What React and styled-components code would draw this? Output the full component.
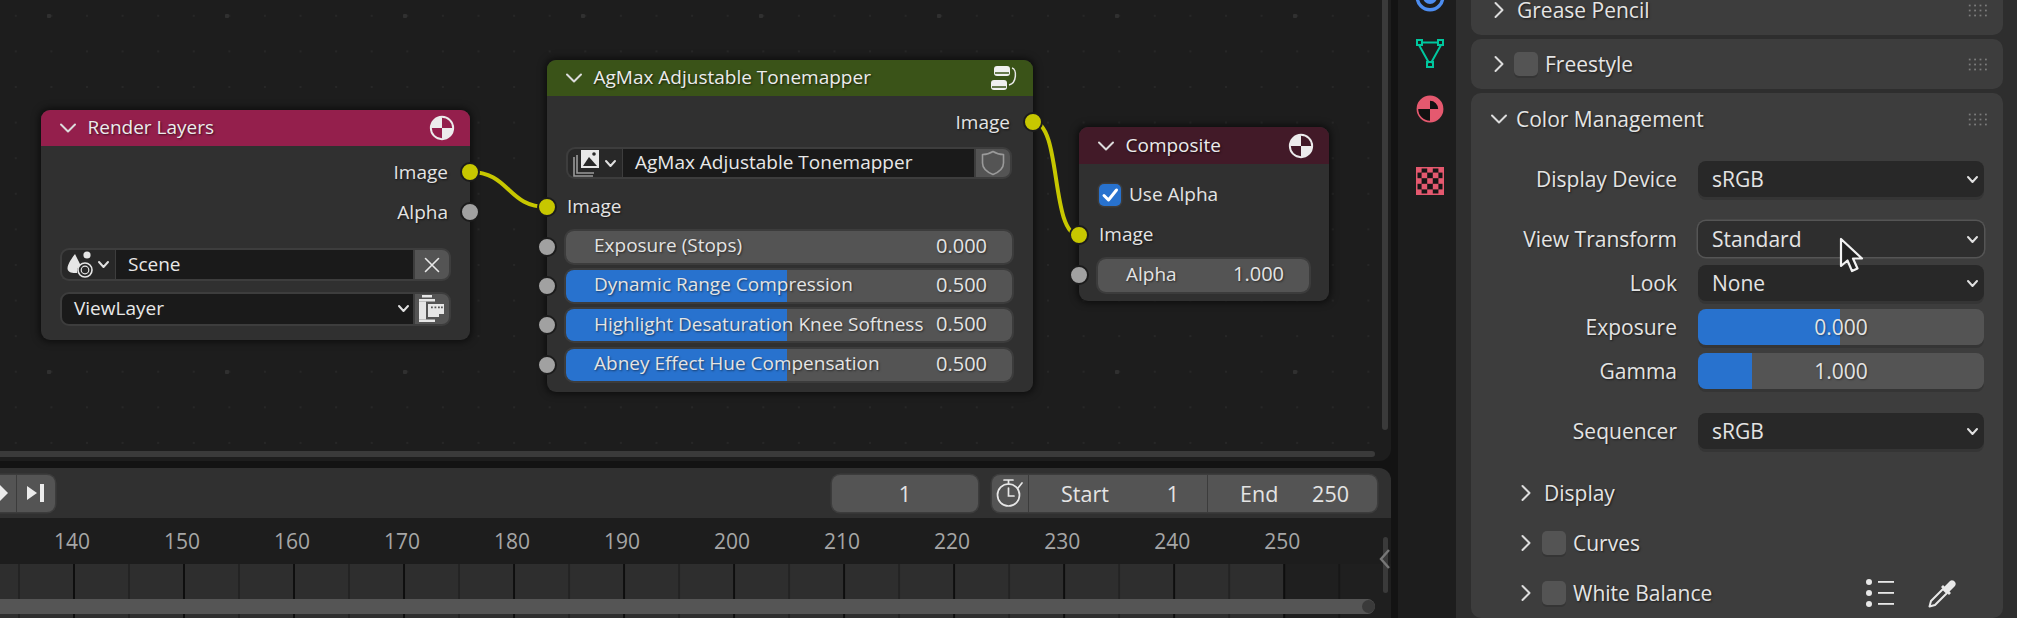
import React from 'react';
import styled, { createGlobalStyle } from 'styled-components';

const FONT = '"Open Sans", "Noto Sans", sans-serif';
const BLUE = '#2872ce';
const YELLOW = '#c7c700';
const GREY_SOCKET = '#a1a1a1';

const GlobalStyle = createGlobalStyle`
    html, body {
        margin: 0;
        width: 2017px;
        height: 618px;
        overflow: hidden;
        background: #131313;
    }
    * { box-sizing: border-box; }
`;

const Screen = styled.div`
    display: flex;
    width: 2017px;
    height: 618px;
    font-family: ${FONT};
    font-size: 19px;
    color: #e4e4e4;
    background: #131313;
    overflow: hidden;`;

const LeftColumn = styled.div`
    width: 1391px;
    flex: none;
    display: flex;
    flex-direction: column;
    gap: 7px;`;

/* ---------- node editor ---------- */

const NodeEditor = styled.div`
    position: relative;
    height: 461px;
    flex: none;
    overflow: hidden;
    border-bottom-right-radius: 12px;
    background-color: #1d1d1d;
    background-image:
        radial-gradient(circle, #303030 2px, transparent 2.5px),
        radial-gradient(circle, #272727 1px, transparent 1.5px);
    background-size: 178px 178px, 35.6px 35.6px;
    background-position: -40px -73px, -2px -2px;`;

const Wires = styled.svg`
    position: absolute;
    inset: 0;`;

const Node = styled.div`
    position: absolute;
    left: ${p => p.$x}px;
    top: ${p => p.$y}px;
    width: ${p => p.$w}px;
    background: #303030;
    border-radius: 9px;
    box-shadow: 0 0 7px 2px rgba(0, 0, 0, .55);`;

const NodeHeader = styled.div`
    height: ${p => p.$h || 36}px;
    display: flex;
    align-items: center;
    padding: 0 15px 0 17px;
    gap: 9.5px;
    background: ${p => p.$color};
    border-radius: 9px 9px 0 0;
    text-shadow: 1px 1px 2px rgba(0, 0, 0, .6);`;

const NodeTitle = styled.span`
    flex: 1;
    margin-bottom: 2px;
    color: #ececec;`;

const NodeBody = styled.div`
    display: flex;
    flex-direction: column;
    padding: ${p => p.$top}px 0 ${p => p.$bottom}px;`;

const SocketRow = styled.div`
    position: relative;
    height: ${p => p.$h || 40}px;
    margin-top: ${p => p.$top || 0}px;
    display: flex;
    align-items: center;
    justify-content: ${p => (p.$end ? 'flex-end' : 'flex-start')};
    padding: 0 ${p => p.$right || 0}px 0 ${p => p.$left || 0}px;
    text-shadow: 1px 1px 2px rgba(0, 0, 0, .6);`;

const RowLabel = styled.span`
    margin-bottom: 2px;`;

const Socket = styled.span`
    position: absolute;
    top: 50%;
    ${p => (p.$end ? 'right: -10px;' : 'left: -10px;')}
    width: 20px;
    height: 20px;
    margin-top: -10px;
    border-radius: 50%;
    background: ${p => (p.$on ? YELLOW : GREY_SOCKET)};
    border: 2px solid #1c1c1c;`;

const WidgetRow = styled.div`
    display: flex;
    height: ${p => p.$h}px;
    margin: ${p => p.$top || 0}px ${p => p.$right}px 0 ${p => p.$left}px;`;

const Picker = styled.div`
    width: ${p => p.$w}px;
    flex: none;
    display: flex;
    align-items: center;
    justify-content: center;
    gap: 3px;
    background: #282828;
    border: 2px solid #3d3d3d;
    border-right: 0;
    border-radius: 9px 0 0 9px;`;

const NameField = styled.div`
    flex: 1;
    display: flex;
    align-items: center;
    justify-content: space-between;
    padding: 0 ${p => p.$endPad || 12}px 2px 12px;
    background: #1a1a1a;
    border: 2px solid #3d3d3d;
    border-left-width: ${p => (p.$round ? 2 : 1)}px;
    border-radius: ${p => (p.$round ? '9px 0 0 9px' : '0')};
    color: #e8e8e8;`;

const SideButton = styled.div`
    width: 36px;
    flex: none;
    display: flex;
    align-items: center;
    justify-content: center;
    background: #545454;
    border: 2px solid #3d3d3d;
    border-left: 0;
    border-radius: 0 9px 9px 0;`;

const NodeSlider = styled.div`
    flex: 1;
    height: ${p => p.$h || 32}px;
    display: flex;
    align-items: center;
    justify-content: space-between;
    padding: 0 25px 3px 28px;
    border-radius: 8px;
    box-shadow: 0 0 0 2px #3c3c3c;
    background: linear-gradient(90deg, ${BLUE} ${p => p.$fill}%, #545454 ${p => p.$fill}%);
    text-shadow: 1px 1px 2px rgba(0, 0, 0, .5);`;

const SliderValue = styled.span`
    font-size: 20px;`;

const CheckRow = styled.div`
    height: 40px;
    display: flex;
    align-items: center;
    gap: 8px;
    padding-left: 20px;`;

const CheckBox = styled.span`
    width: 22px;
    height: 22px;
    flex: none;
    display: flex;
    align-items: center;
    justify-content: center;
    border-radius: 5px;
    background: ${BLUE};
    box-shadow: 0 0 0 1.5px #3c3c3c;`;

const VBar = styled.div`
    position: absolute;
    right: 3px;
    top: 0;
    width: 6px;
    height: 430px;
    border-radius: 0 0 3px 3px;
    background: #3a3a3a;`;

const HBar = styled.div`
    position: absolute;
    left: 0;
    bottom: 4px;
    width: 1375px;
    height: 6px;
    border-radius: 0 3px 3px 0;
    background: #3a3a3a;`;

/* ---------- timeline ---------- */

const Timeline = styled.div`
    flex: 1;
    min-height: 0;
    display: flex;
    flex-direction: column;
    border-top-right-radius: 12px;
    overflow: hidden;`;

const TimelineHeader = styled.div`
    height: 50px;
    flex: none;
    display: flex;
    align-items: center;
    padding: 0 14px 0 0;
    font-size: 21.5px;
    background: #303030;`;

const PlayGroup = styled.div`
    width: 75px;
    height: 37px;
    margin-left: -20px;
    margin-right: auto;
    display: flex;
    border-radius: 8px;
    background: #545454;
    box-shadow: 0 0 0 1.5px #3c3c3c;`;

const PlayCell = styled.div`
    flex: ${p => p.$w}px 0 0;
    display: flex;
    align-items: center;
    justify-content: center;
    & + & { border-left: 1.5px solid #3c3c3c; }`;

const FrameField = styled.div`
    width: 146px;
    height: 37px;
    margin-right: 14px;
    display: flex;
    align-items: center;
    justify-content: center;
    border-radius: 8px;
    background: #545454;
    box-shadow: 0 0 0 1.5px #3c3c3c;`;

const RangeGroup = styled.div`
    width: 385px;
    height: 37px;
    display: flex;
    border-radius: 8px;
    background: #545454;
    box-shadow: 0 0 0 1.5px #3c3c3c;`;

const TimerCell = styled.div`
    width: 37px;
    flex: none;
    display: flex;
    align-items: center;
    justify-content: center;
    border-right: 1.5px solid #3c3c3c;`;

const RangeCell = styled.div`
    width: ${p => p.$w}px;
    flex: none;
    display: flex;
    align-items: center;
    justify-content: space-between;
    padding: 0 28px 0 32px;
    & + & { border-left: 1.5px solid #3c3c3c; }`;

const Ruler = styled.div`
    height: 46px;
    flex: none;
    display: flex;
    align-items: center;
    padding-left: 17px;
    overflow: hidden;
    background: #1d1d1d;`;

const RulerTick = styled.span`
    width: 110.03px;
    flex: none;
    text-align: center;
    color: #a6a6a6;
    font-size: 21px;`;

const Tracks = styled.div`
    position: relative;
    flex: 1;
    background-color: #2e2e2e;
    background-image:
        linear-gradient(90deg, #0e0e0e 2px, transparent 2px),
        linear-gradient(90deg, #232323 2px, transparent 2px);
    background-size: 110.03px 100%, 110.03px 100%;
    background-position: 73px 0, 18px 0;`;

const OutOfRange = styled.div`
    position: absolute;
    left: 1285px;
    right: 0;
    top: 0;
    bottom: 0;
    background: rgba(0, 0, 0, .32);`;

const TrackScroll = styled.div`
    position: absolute;
    left: 0;
    bottom: 4px;
    width: 1375px;
    height: 15px;
    display: flex;
    justify-content: flex-end;
    align-items: center;
    border-radius: 0 8px 8px 0;
    background: #555;`;

const TrackHandle = styled.span`
    width: 13px;
    height: 13px;
    border-radius: 50%;
    background: #3a3a3a;`;

const RegionEdge = styled.div`
    position: absolute;
    right: 3px;
    bottom: 25px;
    width: 5px;
    height: 56px;
    border-radius: 3px;
    background: #3a3a3a;`;

const RegionArrow = styled.svg`
    position: absolute;
    right: -1px;
    bottom: 47px;`;

/* ---------- properties ---------- */

const TabStrip = styled.div`
    width: 58px;
    margin-left: 7px;
    padding-left: 5px;
    flex: none;
    display: flex;
    flex-direction: column;
    align-items: center;
    background: #1d1d1d;`;

const Tab = styled.div`
    height: 56px;
    flex: none;
    display: flex;
    align-items: center;
    justify-content: center;
    margin-top: ${p => p.$top || 0}px;`;

const Properties = styled.div`
    flex: 1;
    display: flex;
    flex-direction: column;
    gap: 4px;
    padding: 0 14px 3px 15px;
    background: #2e2e2e;
    height: 618px;`;

const Panel = styled.div`
    flex: ${p => (p.$grow ? 1 : 'none')};
    margin-top: ${p => p.$top || 0}px;
    border-radius: 10px;
    background: #3d3d3d;`;

const PanelHeader = styled.div`
    height: ${p => p.$h || 50}px;
    display: flex;
    align-items: center;
    padding: 0 14px 0 18px;
    font-size: 21px;
    text-shadow: 1px 1px 2px rgba(0, 0, 0, .55);`;

const Chevron = styled.span`
    width: 20px;
    flex: none;
    display: flex;
    align-items: center;
    justify-content: center;`;

const PanelLabel = styled.span`
    margin-left: ${p => p.$gap}px;
    flex: 1;`;

const Grip = styled.span`
    width: 22px;
    height: 15px;
    background-image: radial-gradient(circle, #7c7c7c .9px, transparent 1.2px);
    background-size: 5.4px 5px;`;

const Toggle = styled.span`
    width: 24px;
    height: 24px;
    flex: none;
    margin-left: ${p => p.$gap}px;
    border-radius: 5px;
    background: #545454;
    box-shadow: 0 2px 0 #353535;`;

const PanelContent = styled.div`
    display: flex;
    flex-direction: column;
    gap: 24px;
    padding: 16px 19px 0 0;`;

const FieldGroup = styled.div`
    display: flex;
    flex-direction: column;
    gap: 8px;`;

const Field = styled.div`
    display: grid;
    grid-template-columns: 206px 286px;
    column-gap: 21px;
    align-items: center;
    height: 36px;`;

const FieldLabel = styled.span`
    text-align: right;
    font-size: 21px;
    text-shadow: 1px 1px 2px rgba(0, 0, 0, .55);`;

const Dropdown = styled.div`
    position: relative;
    height: 36px;
    display: flex;
    align-items: center;
    justify-content: space-between;
    padding: 0 5px 0 14px;
    font-size: 21px;
    border-radius: 8px;
    background: ${p => (p.$hover ? '#2e2e2e' : '#282828')};
    box-shadow: ${p => (p.$hover ? '0 0 0 1.5px #555' : '0 3px 0 #353535')};`;

const Cursor = styled.svg`
    position: absolute;
    z-index: 2;
    left: 141px;
    top: 16px;`;

const ValueBar = styled.div`
    height: 36px;
    display: flex;
    align-items: center;
    justify-content: center;
    font-size: 21px;
    border-radius: 8px;
    box-shadow: 0 3px 0 #353535;
    text-shadow: 1px 1px 2px rgba(0, 0, 0, .4);
    background: linear-gradient(90deg, ${BLUE} ${p => p.$fill}%, #545454 ${p => p.$fill}%);`;

const SubPanels = styled.div`
    display: flex;
    flex-direction: column;
    margin-top: -5px;`;

const SubRow = styled.div`
    height: 50px;
    display: flex;
    align-items: center;
    padding-left: 45px;
    font-size: 21px;
    text-shadow: 1px 1px 2px rgba(0, 0, 0, .55);`;

const SubLabel = styled.span`
    margin-left: ${p => p.$gap}px;
    flex: 1;`;

const SubTool = styled.span`
    display: flex;
    margin-right: ${p => p.$gap}px;`;

/* ---------- icons ---------- */

const ChevronIcon = ({ dir = 'down', size = 20, color = '#dcdcdc' }) => (
    <svg width={size} height={size} viewBox="0 0 20 20" fill="none" stroke={color} strokeWidth="2" strokeLinecap="round" strokeLinejoin="round">
        {dir === 'down'
            ? <path d="M3 6.5 L10 13.5 L17 6.5" />
            : <path d="M6.5 3 L13.5 10 L6.5 17" />}
    </svg>
);

const SmallChevron = () => (
    <svg width="13" height="13" viewBox="0 0 13 13" fill="none" stroke="#e0e0e0" strokeWidth="2" strokeLinecap="round" strokeLinejoin="round">
        <path d="M2 4 L6.5 9 L11 4" />
    </svg>
);

const SphereIcon = ({ color = '#ececec', size = 26 }) => (
    <svg width={size} height={size} viewBox="0 0 24 24" fill="none">
        <circle cx="12" cy="12" r="10.3" stroke={color} strokeWidth="1.8" />
        <path d="M12 12 V2 A10 10 0 0 0 2 12 Z M12 12 V22 A10 10 0 0 0 22 12 Z" fill={color} />
    </svg>
);

const TreeIcon = () => (
    <svg width="28" height="26" viewBox="0 0 28 26" fill="none">
        <rect x="4" y="1" width="16" height="10" rx="3" fill="#f0f0f0" />
        <rect x="1" y="15" width="16" height="10" rx="3" fill="#f0f0f0" />
        <path d="M5 8 H19 M2 22 H16" stroke="#3a5318" strokeWidth="1.5" />
        <path d="M22 3 C27 4 27 18 19 20" stroke="#e8e8e8" strokeWidth="1.5" />
    </svg>
);

const SceneIcon = () => (
    <svg width="27" height="27" viewBox="0 0 27 27" fill="none">
        <path d="M8 3 L13.5 14 C11 15.5 9.5 18.5 10 22 C5 22.5 0.5 21 0.5 17.5 C0.5 13 5 7 8 3 Z" fill="#e6e6e6" />
        <circle cx="20" cy="4" r="3.6" fill="#e6e6e6" />
        <circle cx="18" cy="19" r="7" stroke="#e6e6e6" strokeWidth="1.6" />
        <circle cx="18" cy="19" r="3.8" stroke="#e6e6e6" strokeWidth="1.2" />
    </svg>
);

const FilmIcon = () => (
    <svg width="26" height="30" viewBox="0 0 26 30" fill="#e6e6e6">
        <rect x="3" y="1" width="10" height="2.5" />
        <rect x="0" y="5" width="16" height="2.5" />
        <rect x="0" y="7.5" width="7" height="18" />
        <rect x="0" y="25.5" width="16" height="2.5" />
        <path d="M9 10 H25 V20 H20 V23 H9 Z" />
        <path d="M12 12.5 h1.8 v1.8 h-1.8z M15.5 12.5 h1.8 v1.8 h-1.8z M19 12.5 h1.8 v1.8 h-1.8z M22 12.5 h1.8 v1.8 h-1.8z" fill="#545454" />
    </svg>
);

const ImageStackIcon = () => (
    <svg width="28" height="28" viewBox="0 0 28 28" fill="none">
        <path d="M1 8 V27 H20 M4 6 V24 H21" stroke="#9a9a9a" strokeWidth="1.6" />
        <rect x="8" y="1" width="18" height="18" fill="#e8e8e8" />
        <path d="M10 17 L16 8 L24 17 Z" fill="#282828" />
        <circle cx="21" cy="5" r="1.8" fill="#282828" />
    </svg>
);

const ShieldIcon = () => (
    <svg width="24" height="26" viewBox="0 0 24 26" fill="none" stroke="#9a9a9a" strokeWidth="1.6" strokeLinejoin="round">
        <path d="M12 1.5 C15 3.5 19 4.5 22.5 4.5 V13 C22.5 18.5 17 22.5 12 24.5 C7 22.5 1.5 18.5 1.5 13 V4.5 C5 4.5 9 3.5 12 1.5 Z" />
    </svg>
);

const CloseIcon = () => (
    <svg width="16" height="16" viewBox="0 0 16 16" fill="none" stroke="#e8e8e8" strokeWidth="1.6" strokeLinecap="round">
        <path d="M1.5 1.5 L14.5 14.5 M14.5 1.5 L1.5 14.5" />
    </svg>
);

const CheckIcon = () => (
    <svg width="18" height="18" viewBox="0 0 18 18" fill="none" stroke="#fff" strokeWidth="3" strokeLinecap="round" strokeLinejoin="round">
        <path d="M3 9.5 L7.5 14 L15.5 4" />
    </svg>
);

const NextKeyIcon = () => (
    <svg width="20" height="20" viewBox="0 0 20 20" fill="#ececec">
        <path d="M1 3 L11 10 L1 17 Z" />
        <rect x="14" y="1" width="4" height="18" />
    </svg>
);

const DiamondIcon = () => (
    <svg width="24" height="24" viewBox="0 0 24 24" fill="#ececec">
        <path d="M12 2 L22 12 L12 22 L2 12 Z" />
    </svg>
);

const TimerIcon = () => (
    <svg width="28" height="30" viewBox="0 0 28 30" fill="none" stroke="#e6e6e6" strokeWidth="1.7" strokeLinecap="round">
        <path d="M8 2 H17 M12.5 2 V6" />
        <circle cx="12.5" cy="17" r="11" />
        <path d="M12.5 10 V18 H18" />
        <path d="M22 10 L26 5" />
    </svg>
);

const TargetIcon = () => (
    <svg width="30" height="30" viewBox="0 0 30 30" fill="none" stroke="#4d8df0">
        <circle cx="15" cy="15" r="12.8" strokeWidth="3.4" />
        <circle cx="15" cy="15" r="7" fill="#4d8df0" strokeWidth="0" />
    </svg>
);

const MeshIcon = () => (
    <svg width="28" height="29" viewBox="0 0 28 29" fill="none" stroke="#00c79e" strokeWidth="2">
        <path d="M3 6 L13 24 M25 6 L15 24 M6 3.5 H22" />
        <rect x="1" y="1" width="5" height="5" />
        <rect x="22" y="1" width="5" height="5" />
        <rect x="11" y="23" width="6" height="5" />
    </svg>
);

const MaterialIcon = () => (
    <svg width="28" height="28" viewBox="0 0 24 24" fill="none">
        <circle cx="12" cy="12" r="10.8" fill="#111" stroke="#e5596f" strokeWidth="1.4" />
        <path d="M12 12 V1 A11 11 0 0 0 1 12 Z M12 12 V23 A11 11 0 0 0 23 12 Z M12 1 A11 11 0 0 1 23 12 H19 A7 7 0 0 0 12 5 Z" fill="#e5596f" />
    </svg>
);

const CheckerIcon = () => {
    const cells = [];
    for (let r = 0; r < 5; r++) {
        for (let c = 0; c < 5; c++) {
            if ((r + c) % 2 === 0) cells.push(<rect key={`${r}-${c}`} x={c * 5.6} y={r * 5.6} width="5.6" height="5.6" fill="#e5596f" />);
        }
    }
    return (
        <svg width="28" height="28" viewBox="0 0 28 28">
            <rect width="28" height="28" fill="#161616" />
            {cells}
            <rect x=".75" y=".75" width="26.5" height="26.5" fill="none" stroke="#e5596f" strokeWidth="1.5" />
        </svg>
    );
};

const ListIcon = () => (
    <svg width="30" height="28" viewBox="0 0 30 28" fill="#e8e8e8">
        <circle cx="4" cy="3" r="3" />
        <circle cx="4" cy="14" r="3" />
        <circle cx="4" cy="25" r="3" />
        <rect x="13" y="2" width="16" height="1.8" />
        <rect x="13" y="13" width="16" height="1.8" />
        <rect x="13" y="24" width="16" height="1.8" />
    </svg>
);

const EyedropperIcon = () => (
    <svg width="30" height="30" viewBox="0 0 30 30" fill="none">
        <path d="M1.5 28.5 L3 23 L15 11 L19 15 L7 27 Z" stroke="#e8e8e8" strokeWidth="2" strokeLinejoin="round" />
        <path d="M13 9 L21 17 L23 15 L21.5 13.5 L27 8 C29.5 5 25 0.5 22 3 L16.5 8.5 L15 7 Z" fill="#e8e8e8" />
    </svg>
);

const PointerIcon = () => (
    <Cursor width="26" height="38" viewBox="0 0 26 38">
        <path d="M2 2 V29 L8.5 23.5 L13 34 L18.5 31.5 L14 21.5 H23 Z" fill="#222" stroke="#f2f2f2" strokeWidth="2.2" strokeLinejoin="round" />
    </Cursor>
);

/* ---------- data ---------- */

const tonemapSliders = [
    { label: 'Exposure (Stops)', value: '0.000', fill: 0 },
    { label: 'Dynamic Range Compression', value: '0.500', fill: 49.6 },
    { label: 'Highlight Desaturation Knee Softness', value: '0.500', fill: 49.6 },
    { label: 'Abney Effect Hue Compensation', value: '0.500', fill: 49.6 },
];

const frames = [140, 150, 160, 170, 180, 190, 200, 210, 220, 230, 240, 250];

function RenderLayersNode() {
    return (
        <Node $x={41} $y={110} $w={429}>
            <NodeHeader $color="#941f4c">
                <ChevronIcon />
                <NodeTitle>Render Layers</NodeTitle>
                <SphereIcon />
            </NodeHeader>
            <NodeBody $top={6} $bottom={14}>
                <SocketRow $end $right={22}>Image<Socket $end $on /></SocketRow>
                <SocketRow $end $right={22}>Alpha<Socket $end /></SocketRow>
                <WidgetRow $h={33} $top={16} $left={19} $right={19}>
                    <Picker $w={55}><SceneIcon /><SmallChevron /></Picker>
                    <NameField>Scene</NameField>
                    <SideButton><CloseIcon /></SideButton>
                </WidgetRow>
                <WidgetRow $h={34} $top={11} $left={19} $right={19}>
                    <NameField $round $endPad={3}>ViewLayer<SmallChevron /></NameField>
                    <SideButton><FilmIcon /></SideButton>
                </WidgetRow>
            </NodeBody>
        </Node>
    );
}

function TonemapperNode() {
    return (
        <Node $x={547} $y={60} $w={486}>
            <NodeHeader $color="#3a5318">
                <ChevronIcon />
                <NodeTitle>AgMax Adjustable Tonemapper</NodeTitle>
                <TreeIcon />
            </NodeHeader>
            <NodeBody $top={6} $bottom={8}>
                <SocketRow $end $right={23}>Image<Socket $end $on /></SocketRow>
                <WidgetRow $h={32} $top={5} $left={19} $right={21}>
                    <Picker $w={56}><ImageStackIcon /><SmallChevron /></Picker>
                    <NameField>AgMax Adjustable Tonemapper</NameField>
                    <SideButton><ShieldIcon /></SideButton>
                </WidgetRow>
                <SocketRow $left={20} $top={8}><RowLabel>Image</RowLabel><Socket $on /></SocketRow>
                {tonemapSliders.map((item, i) => (
                    <SocketRow key={i} $h={39.3} $left={19} $right={21}>
                        <Socket />
                        <NodeSlider $fill={item.fill}>
                            <span>{item.label}</span><SliderValue>{item.value}</SliderValue>
                        </NodeSlider>
                    </SocketRow>
                ))}
            </NodeBody>
        </Node>
    );
}

function CompositeNode() {
    return (
        <Node $x={1079} $y={127} $w={250}>
            <NodeHeader $color="#421a28" $h={37}>
                <ChevronIcon />
                <NodeTitle>Composite</NodeTitle>
                <SphereIcon />
            </NodeHeader>
            <NodeBody $top={11} $bottom={6}>
                <CheckRow><CheckBox><CheckIcon /></CheckBox><RowLabel>Use Alpha</RowLabel></CheckRow>
                <SocketRow $left={20}><RowLabel>Image</RowLabel><Socket $on /></SocketRow>
                <SocketRow $left={19} $right={20}>
                    <Socket />
                    <NodeSlider $fill={0} $h={33}>
                        <span>Alpha</span><SliderValue>1.000</SliderValue>
                    </NodeSlider>
                </SocketRow>
            </NodeBody>
        </Node>
    );
}

function PropertiesPanel() {
    return (
        <Properties>
            <Panel $top={-15}>
                <PanelHeader>
                    <Chevron><ChevronIcon dir="right" /></Chevron>
                    <PanelLabel $gap={8}>Grease Pencil</PanelLabel>
                    <Grip />
                </PanelHeader>
            </Panel>
            <Panel>
                <PanelHeader>
                    <Chevron><ChevronIcon dir="right" /></Chevron>
                    <Toggle $gap={5} />
                    <PanelLabel $gap={7}>Freestyle</PanelLabel>
                    <Grip />
                </PanelHeader>
            </Panel>
            <Panel $grow>
                <PanelHeader $h={52}>
                    <Chevron><ChevronIcon /></Chevron>
                    <PanelLabel $gap={7}>Color Management</PanelLabel>
                    <Grip />
                </PanelHeader>
                <PanelContent>
                    <Field>
                        <FieldLabel>Display Device</FieldLabel>
                        <Dropdown>sRGB<SmallChevron /></Dropdown>
                    </Field>
                    <FieldGroup>
                        <Field>
                            <FieldLabel>View Transform</FieldLabel>
                            <Dropdown $hover>Standard<SmallChevron /><PointerIcon /></Dropdown>
                        </Field>
                        <Field>
                            <FieldLabel>Look</FieldLabel>
                            <Dropdown>None<SmallChevron /></Dropdown>
                        </Field>
                        <Field>
                            <FieldLabel>Exposure</FieldLabel>
                            <ValueBar $fill={49.5}>0.000</ValueBar>
                        </Field>
                        <Field>
                            <FieldLabel>Gamma</FieldLabel>
                            <ValueBar $fill={19}>1.000</ValueBar>
                        </Field>
                    </FieldGroup>
                    <Field>
                        <FieldLabel>Sequencer</FieldLabel>
                        <Dropdown>sRGB<SmallChevron /></Dropdown>
                    </Field>
                    <SubPanels>
                        <SubRow>
                            <Chevron><ChevronIcon dir="right" /></Chevron>
                            <SubLabel $gap={8}>Display</SubLabel>
                        </SubRow>
                        <SubRow>
                            <Chevron><ChevronIcon dir="right" /></Chevron>
                            <Toggle $gap={6} />
                            <SubLabel $gap={7}>Curves</SubLabel>
                        </SubRow>
                        <SubRow>
                            <Chevron><ChevronIcon dir="right" /></Chevron>
                            <Toggle $gap={6} />
                            <SubLabel $gap={7}>White Balance</SubLabel>
                            <SubTool $gap={33}><ListIcon /></SubTool>
                            <SubTool $gap={26}><EyedropperIcon /></SubTool>
                        </SubRow>
                    </SubPanels>
                </PanelContent>
            </Panel>
        </Properties>
    );
}

export default function App() {
    return (
        <Screen>
            <GlobalStyle />
            <LeftColumn>
                <NodeEditor>
                    <Wires width="1391" height="461">
                        <path d="M470 172 C 510 172, 507 207, 547 207" fill="none" stroke={YELLOW} strokeWidth="4" />
                        <path d="M1033 122 C 1062 122, 1050 235, 1079 235" fill="none" stroke={YELLOW} strokeWidth="4" />
                    </Wires>
                    <RenderLayersNode />
                    <TonemapperNode />
                    <CompositeNode />
                    <VBar />
                    <HBar />
                </NodeEditor>
                <Timeline>
                    <TimelineHeader>
                        <PlayGroup>
                            <PlayCell $w={36}><DiamondIcon /></PlayCell>
                            <PlayCell $w={39}><NextKeyIcon /></PlayCell>
                        </PlayGroup>
                        <FrameField>1</FrameField>
                        <RangeGroup>
                            <TimerCell><TimerIcon /></TimerCell>
                            <RangeCell $w={178}><span>Start</span><span>1</span></RangeCell>
                            <RangeCell $w={170}><span>End</span><span>250</span></RangeCell>
                        </RangeGroup>
                    </TimelineHeader>
                    <Ruler>
                        {frames.map(f => <RulerTick key={f}>{f}</RulerTick>)}
                    </Ruler>
                    <Tracks>
                        <OutOfRange />
                        <TrackScroll><TrackHandle /></TrackScroll>
                        <RegionEdge />
                        <RegionArrow width="14" height="24" viewBox="0 0 14 24" fill="none" stroke="#777" strokeWidth="2.4">
                            <path d="M11 3 L3 12 L11 21" />
                        </RegionArrow>
                    </Tracks>
                </Timeline>
            </LeftColumn>
            <TabStrip>
                <Tab $top={-31}><TargetIcon /></Tab>
                <Tab><MeshIcon /></Tab>
                <Tab><MaterialIcon /></Tab>
                <Tab $top={16}><CheckerIcon /></Tab>
            </TabStrip>
            <PropertiesPanel />
        </Screen>
    );
}
